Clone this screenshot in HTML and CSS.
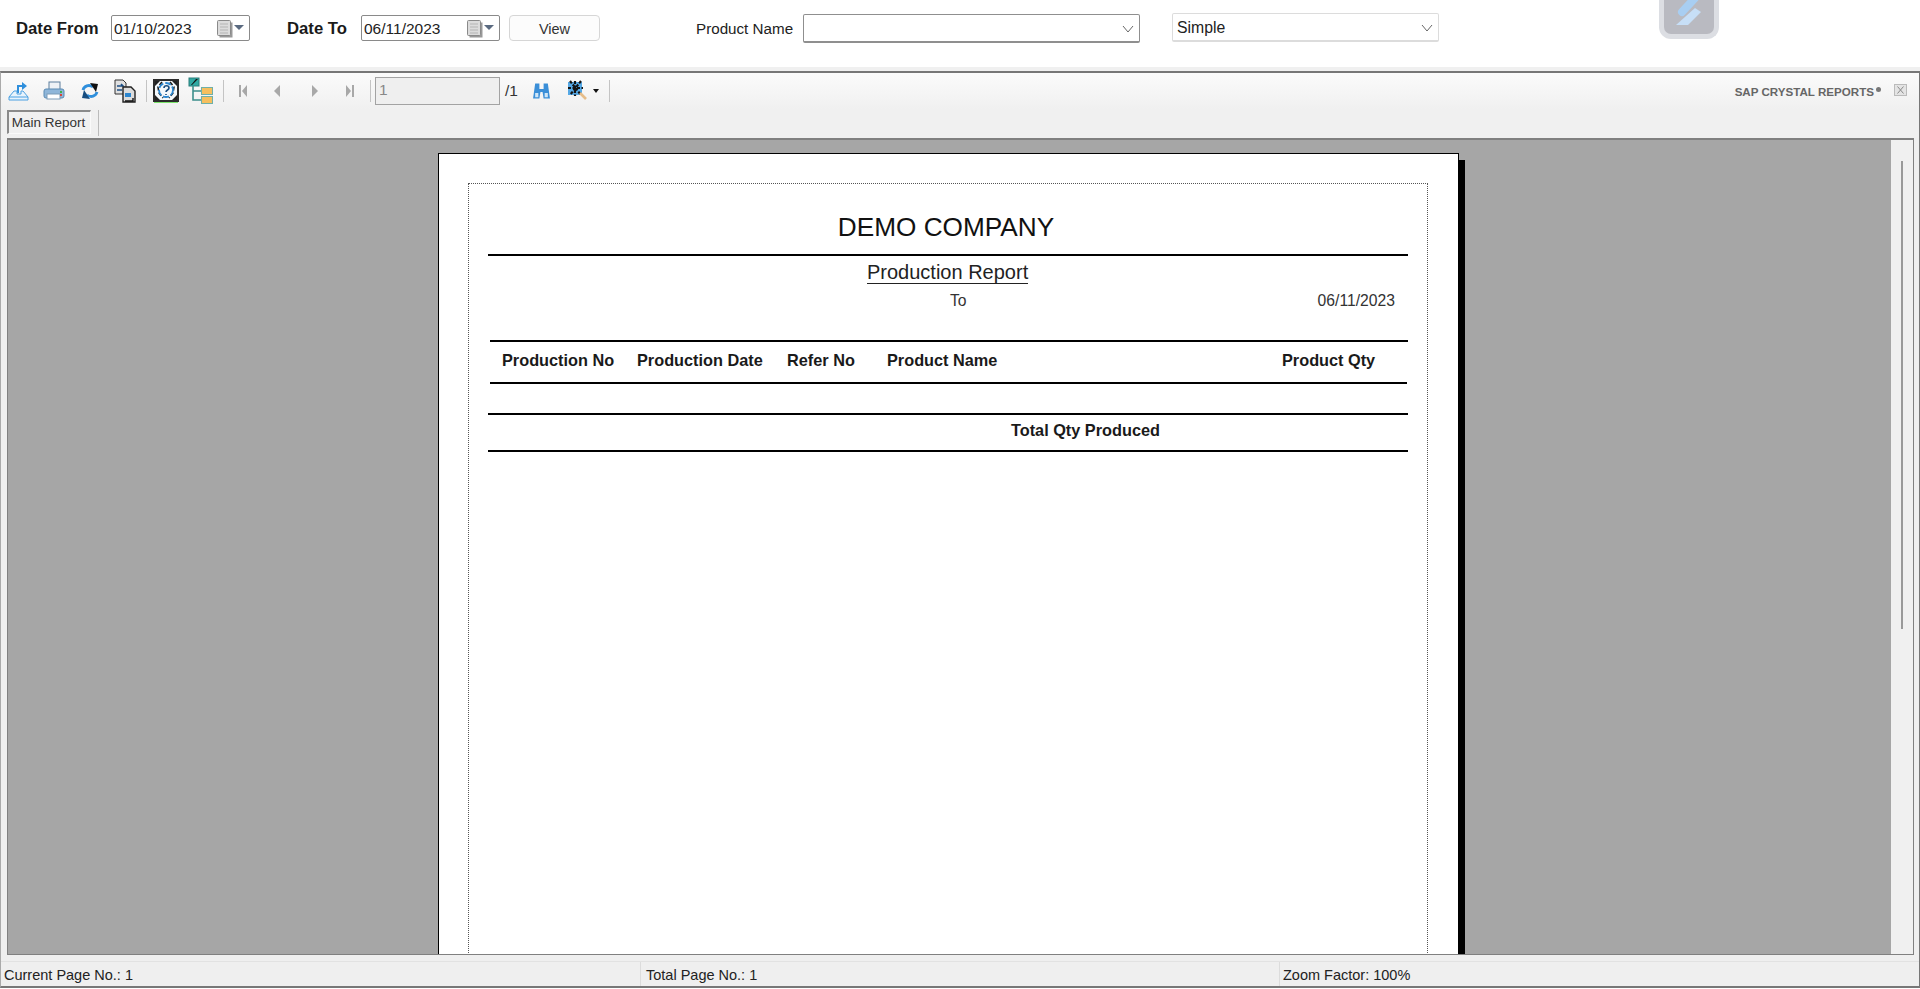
FILE: index.html
```html
<!DOCTYPE html>
<html lang="en">
<head>
    <meta charset="UTF-8">
    <title>Production Report</title>
    <link rel="stylesheet" href="styles.css">
</head>
<body>
    <div class="filter-bar">
        <span class="bold-label label-from">Date From</span>
        <div class="date-box">
            <span>01/10/2023</span>
            <svg class="cal-icon" width="28" height="18" viewBox="0 0 28 18">
                <rect x="2.500" y="2.500" width="13" height="15" fill="#999"/>
                <rect x="0.500" y="0.500" width="13" height="15" rx="1" fill="#dcdcdc" stroke="#8a8a8a"/>
                <path d="M3 4h8M3 7h8M3 10h8M3 13h8" stroke="#b4b4b4"/>
                <path d="M17 5h10l-5 5z" fill="#5a6a80"/>
            </svg>
        </div>
        <span class="bold-label label-to">Date To</span>
        <div class="date-box">
            <span>06/11/2023</span>
            <svg class="cal-icon" width="28" height="18" viewBox="0 0 28 18">
                <rect x="2.500" y="2.500" width="13" height="15" fill="#999"/>
                <rect x="0.500" y="0.500" width="13" height="15" rx="1" fill="#dcdcdc" stroke="#8a8a8a"/>
                <path d="M3 4h8M3 7h8M3 10h8M3 13h8" stroke="#b4b4b4"/>
                <path d="M17 5h10l-5 5z" fill="#5a6a80"/>
            </svg>
        </div>
        <button class="view-btn">View</button>
        <span class="product-label">Product Name</span>
        <div class="combo combo-product">
            <span></span>
            <svg width="12" height="8" viewBox="0 0 12 8"><path d="M1 1l5 6 5-6" fill="none" stroke="#666"/></svg>
        </div>
        <div class="combo combo-type">
            <span>Simple</span>
            <svg width="12" height="8" viewBox="0 0 12 8"><path d="M1 1l5 6 5-6" fill="none" stroke="#666"/></svg>
        </div>
        <div class="app-logo">
            <svg width="50" height="34" viewBox="0 0 50 34">
                <path d="M31 -2L18 12" fill="none" stroke="#a8cef2" stroke-width="8" stroke-linecap="round"/>
                <path d="M12 25L31 8l6 4-13 13z" fill="#c7dff7"/>
            </svg>
        </div>
    </div>
    <div class="band"></div>

    <div class="viewer">
        <div class="toolbar">
            <svg class="tool tool-export" width="21" height="20" viewBox="0 0 21 20">
                <path d="M10 12V5h5" fill="none" stroke="#2f8fdc" stroke-width="2"/>
                <path d="M14 1l5 4-5 4z" fill="#2f8fdc"/>
                <path d="M6 10h3v3h4v-3h2l5 6v3H1v-3z" fill="#e8f3fc" stroke="#4aa0e2"/>
                <path d="M1 16h19" stroke="#4aa0e2"/>
            </svg>
            <svg class="tool tool-print" width="22" height="20" viewBox="0 0 22 20">
                <rect x="6" y="1" width="11" height="8" fill="#eef2f6" stroke="#5d7f9e"/>
                <rect x="1" y="8" width="20" height="9" rx="2" fill="#8fb6d9" stroke="#5b8ab3"/>
                <rect x="4" y="13" width="13" height="5" fill="#fff" stroke="#7d9cb8"/>
                <rect x="17" y="10" width="2" height="2" fill="#3fb04a"/>
                <rect x="17" y="13" width="2" height="2" fill="#d8433a"/>
            </svg>
            <svg class="tool tool-refresh" width="18" height="18" viewBox="0 0 18 18">
                <path d="M2 8c1-4 6-6 10-3" fill="none" stroke="#2f8fdc" stroke-width="2.800"/>
                <path d="M9 1l8 1-2 8z" fill="#111"/>
                <path d="M16 10c-1 4-6 6-10 3" fill="none" stroke="#2f8fdc" stroke-width="2.800"/>
                <path d="M9 17l-8-1 2-8z" fill="#174d80"/>
            </svg>
            <svg class="tool tool-copy" width="22" height="24" viewBox="0 0 22 24">
                <path d="M1 1h8l3 3v11H1z" fill="#e0e0e0" stroke="#333"/>
                <path d="M3 7h6l-2-2M3 11h5" fill="none" stroke="#1c4f85" stroke-width="1.600"/>
                <path d="M9 8h8l4 4v11H9z" fill="#dcdcdc" stroke="#222" stroke-width="1.400"/>
                <rect x="11" y="14" width="6" height="4" fill="#2c86cf"/>
                <path d="M19 19v3h-8" fill="none" stroke="#111" stroke-width="1.400"/>
            </svg>
            <span class="tool-sep sep-a"></span>
            <svg class="tool tool-group" width="26" height="24" viewBox="0 0 26 24">
                <rect x="1" y="1" width="24" height="21" fill="#f4f8fb" stroke="#2b2b2b" stroke-width="2"/>
                <path d="M2 2h5L2 7zM24 2h-5l5 5zM2 21h5l-5-5zM24 21h-5l5-5z" fill="#222"/>
                <path d="M9 3l-4 5 1 6 4 5M17 3l4 5-1 6-4 5" fill="none" stroke="#1c1c1c" stroke-width="1.600" stroke-dasharray="4 2"/>
                <circle cx="13" cy="11" r="7" fill="none" stroke="#2a87d2" stroke-width="1.800" stroke-dasharray="6 2"/>
                <path d="M11 9c0-3 5-3 5 0 0 2-3 2-3 4M13 15v1" fill="none" stroke="#174d80" stroke-width="1.600"/>
                <path d="M1 23.500h24" stroke="#7be36b"/>
            </svg>
            <svg class="tool tool-tree" width="26" height="27" viewBox="0 0 26 27">
                <rect x="1" y="1" width="10" height="8" fill="#30a9a3" stroke="#2b7c7a"/>
                <path d="M3 8l5-6h2l-6 6z" fill="#111"/>
                <path d="M5 9v14h8M5 14h8" fill="none" stroke="#3d8f8c" stroke-width="1.600"/>
                <rect x="13.500" y="10.500" width="11" height="7" fill="#f6bf5e" stroke="#6fb0a8"/>
                <rect x="13.500" y="19.500" width="11" height="7" fill="#f6bf5e" stroke="#6fb0a8"/>
            </svg>
            <span class="tool-sep sep-b"></span>
            <svg class="tool nav-first" width="10" height="14" viewBox="0 0 10 14"><path d="M1 1h2v12H1zM9 1v12L4 7z" fill="#a8a8a8"/></svg>
            <svg class="tool nav-prev" width="8" height="14" viewBox="0 0 8 14"><path d="M7 1v12L1 7z" fill="#a8a8a8"/></svg>
            <svg class="tool nav-next" width="8" height="14" viewBox="0 0 8 14"><path d="M1 1v12l6-6z" fill="#a8a8a8"/></svg>
            <svg class="tool nav-last" width="10" height="14" viewBox="0 0 10 14"><path d="M1 1v12l5-6zM7 1h2v12H7z" fill="#a8a8a8"/></svg>
            <span class="tool-sep sep-c"></span>
            <div class="page-box">1</div>
            <span class="page-total">/1</span>
            <svg class="tool tool-find" width="19" height="18" viewBox="0 0 18 16">
                <path d="M3 1h4v5h4V1h4l2 14h-6l-1-6H8l-1 6H1z" fill="#3b8fd8"/>
                <path d="M3 10h3v4H3zM12 10h3v4h-3z" fill="#cfe6f8"/>
            </svg>
            <svg class="tool tool-zoom" width="20" height="21" viewBox="0 0 20 21">
                <rect x="1" y="2" width="14" height="13" fill="#56a9e6"/>
                <path d="M3 1l11 14M14 1L3 15M1 8h15M8 1v15" stroke="#141414" stroke-width="2.200" stroke-dasharray="3 1.500"/>
                <path d="M13 13l6 6" stroke="#e6bd8a" stroke-width="2.600"/>
            </svg>
            <span class="tool-caret"></span>
            <span class="tool-sep sep-d"></span>
            <span class="brand">SAP CRYSTAL REPORTS<i class="brand-mark"></i></span>
            <svg class="close-x" width="13" height="12" viewBox="0 0 13 12">
                <rect x="0.500" y="0.500" width="12" height="11" fill="#e4e4e4" stroke="#bbb"/>
                <path d="M3.500 2.500l6 7M9.500 2.500l-6 7" stroke="#8a8a8a"/>
            </svg>
        </div>

        <div class="tab-row">
            <div class="tab">Main Report</div>
            <span class="tab-sep"></span>
        </div>

        <div class="report-area">
            <div class="canvas">
                <div class="page">
                    <div class="page-frame">
                        <h1 class="company">DEMO COMPANY</h1>
                        <div class="rule rule-head"></div>
                        <div class="report-title"><span>Production Report</span></div>
                        <div class="date-row">
                            <span class="date-to-word">To</span>
                            <span class="date-value">06/11/2023</span>
                        </div>
                        <div class="rule rule-cols-top"></div>
                        <div class="col-row">
                            <span>Production No</span>
                            <span>Production Date</span>
                            <span>Refer No</span>
                            <span>Product Name</span>
                            <span>Product Qty</span>
                        </div>
                        <div class="rule rule-cols-bottom"></div>
                        <div class="rule rule-total-top"></div>
                        <div class="total-row">Total Qty Produced</div>
                        <div class="rule rule-total-bottom"></div>
                    </div>
                </div>
            </div>
            <div class="scroll-track"><span class="scroll-thumb"></span></div>
        </div>

        <div class="status-bar">
            <div class="status-cell cell-current">Current Page No.: 1</div>
            <div class="status-cell cell-total">Total Page No.: 1</div>
            <div class="status-cell cell-zoom">Zoom Factor: 100%</div>
        </div>
    </div>
</body>
</html>
```

FILE: styles.css
```css
html, body {
    margin: 0;
    padding: 0;
    height: 989px;
    overflow: hidden;
    background: white;
}
body {
    font-family: "Liberation Sans", Arial, sans-serif;
    color: #222;
}

/* filter bar */
.filter-bar {
    height: 67px;
    box-sizing: border-box;
    padding: 15px 0 0 16px;
    display: flex;
    align-items: flex-start;
}
.bold-label {
    font-size: 16.700px;
    font-weight: bold;
    line-height: 27px;
    color: #1a1a1a;
}
.label-from {
    width: 95px;
}
.label-to {
    margin-left: 37px;
    width: 74px;
}
.date-box {
    width: 139px;
    height: 26px;
    box-sizing: border-box;
    border: 1px solid #8a8a8a;
    border-radius: 2px;
    padding: 1px 4px 0 2px;
    display: flex;
    align-items: center;
    justify-content: space-between;
    font-size: 15.500px;
}
.view-btn {
    margin-left: 9px;
    width: 91px;
    height: 26px;
    background: #fcfcfc;
    border: 1px solid #d6d6d6;
    border-radius: 4px;
    font-family: inherit;
    font-size: 14.500px;
    color: #333;
    padding: 2px 0 0;
}
.product-label {
    margin-left: 96px;
    width: 107px;
    font-size: 15.200px;
    line-height: 28px;
    color: #222;
}
.combo {
    height: 29px;
    box-sizing: border-box;
    background: white;
    display: flex;
    align-items: center;
    justify-content: space-between;
    font-size: 15.800px;
    padding: 1px 5px 0 4px;
}
.combo-product {
    width: 337px;
    margin-top: -1px;
    border: 1px solid #8f8f8f;
    border-bottom-width: 2px;
    border-radius: 2px;
}
.combo-type {
    width: 267px;
    margin-left: 32px;
    margin-top: -2px;
    border: 1px solid #dcdcdc;
    border-bottom-width: 2px;
    border-radius: 2px;
}
.app-logo {
    margin-left: 220px;
    margin-top: -15px;
    width: 60px;
    height: 39px;
    box-sizing: border-box;
    background: #b9bac1;
    border: 5px solid #dcdee3;
    border-top: none;
    border-radius: 0 0 12px 12px;
    display: flex;
    justify-content: center;
}
.band {
    height: 4px;
    background: #f0f0f0;
}

/* viewer */
.viewer {
    height: 917px;
    box-sizing: border-box;
    border: 1px solid #777;
    border-top-width: 2px;
    border-bottom-width: 2px;
    border-left-color: #aaa;
    background: #efefef;
    display: flex;
    flex-direction: column;
}
.toolbar {
    height: 36px;
    flex: none;
    box-sizing: border-box;
    padding-bottom: 1px;
    display: flex;
    align-items: center;
    background: linear-gradient(#fbfbfb, #f0f0f0);
    font-size: 15px;
}
.tool {
    flex: none;
}
.tool-export { margin-left: 7px; }
.tool-print { margin-left: 14px; }
.tool-refresh { margin-left: 16px; }
.tool-copy { margin-left: 15px; }
.tool-sep {
    width: 1px;
    height: 22px;
    background: #c4c4c4;
    flex: none;
}
.sep-a { margin-left: 10px; }
.tool-group { margin-left: 6px; }
.tool-tree { margin-left: 9px; }
.sep-b { margin-left: 9px; }
.nav-first { margin-left: 14px; }
.nav-prev { margin-left: 25px; }
.nav-next { margin-left: 30px; }
.nav-last { margin-left: 26px; }
.sep-c { margin-left: 15px; }
.page-box {
    margin-left: 4px;
    width: 125px;
    height: 28px;
    box-sizing: border-box;
    background: #efefef;
    border: 1px solid #a3a3a3;
    padding-left: 3px;
    font-size: 15.500px;
    color: #888;
    line-height: 24px;
}
.page-total {
    margin-left: 5px;
    width: 27px;
    font-size: 15.500px;
    color: #333;
}
.tool-zoom { margin-left: 16px; }
.tool-caret {
    margin-left: 6px;
    border-left: 3.500px solid transparent;
    border-right: 3.500px solid transparent;
    border-top: 4px solid #111;
}
.sep-d { margin-left: 10px; }
.brand {
    margin-left: auto;
    margin-top: 2px;
    font-size: 11.600px;
    font-weight: bold;
    color: #666;
    display: flex;
    align-items: flex-start;
}
.brand-mark {
    width: 5px;
    height: 5px;
    border-radius: 50%;
    background: #777;
    margin: 2px 0 0 2px;
}
.close-x {
    margin-left: 13px;
    margin-right: 12px;
    margin-top: -2px;
}
.tab-row {
    height: 29px;
    flex: none;
    box-sizing: border-box;
    padding: 1px 0 0 6px;
    display: flex;
    background: #f0f0f0;
}
.tab {
    width: 84px;
    height: 24px;
    box-sizing: border-box;
    border-top: 2px solid #8a8a8a;
    border-left: 2px solid #8a8a8a;
    border-bottom: 1px solid #fafafa;
    border-right: 1px solid #fafafa;
    padding-right: 2px;
    font-size: 13.500px;
    line-height: 22px;
    text-align: center;
    color: #333;
}
.tab-sep {
    margin-left: 7px;
    width: 1px;
    height: 26px;
    background: #bbb;
}

/* report canvas */
.report-area {
    height: 817px;
    flex: none;
    margin: 0 5px 0 6px;
    box-sizing: border-box;
    border-top: 2px solid #808080;
    border-left: 1px solid #808080;
    border-right: 1px solid #808080;
    border-bottom: 1px solid #808080;
    background: #a6a6a6;
    display: flex;
    overflow: hidden;
}
.canvas {
    flex: 1;
    padding: 13px 0 0 430px;
    overflow: hidden;
}
.page {
    width: 1021px;
    height: 900px;
    box-sizing: border-box;
    background: white;
    border: 1px solid #000;
    box-shadow: 6px 7px 0 #000;
    padding: 29px 0 0 29px;
}
.page-frame {
    width: 960px;
    height: 860px;
    box-sizing: border-box;
    border: 1px dotted #555;
    padding-left: 19px;
}
.company {
    margin: 23px 0 0;
    width: 916px;
    height: 47px;
    font-size: 26.200px;
    font-weight: normal;
    line-height: 40px;
    text-align: center;
    color: #111;
}
.rule {
    height: 2px;
    width: 920px;
    background: #000;
}
.report-title {
    margin-top: 4px;
    width: 920px;
    padding-left: 379px;
    box-sizing: border-box;
    font-size: 20px;
    line-height: 24px;
    color: #222;
}
.report-title span {
    display: inline-block;
    border-bottom: 1px solid #222;
    line-height: 22px;
}
.date-row {
    height: 24px;
    margin-top: 5px;
    display: flex;
    font-size: 15.700px;
    line-height: 24px;
    color: #333;
}
.date-to-word {
    margin-left: 462px;
}
.date-value {
    margin-left: 351px;
}
.rule-cols-top {
    margin-top: 27px;
    margin-left: 2px;
    width: 918px;
}
.col-row {
    height: 40px;
    box-sizing: border-box;
    padding-bottom: 3px;
    margin-left: 14px;
    display: grid;
    grid-template-columns: 135px 150px 100px 395px auto;
    align-items: center;
    font-size: 16.300px;
    font-weight: bold;
    color: #1a1a1a;
}
.rule-cols-bottom {
    margin-left: 2px;
    width: 917px;
}
.rule-total-top {
    margin-top: 29px;
}
.total-row {
    height: 35px;
    padding-left: 523px;
    font-size: 16.300px;
    font-weight: bold;
    line-height: 31px;
    color: #1a1a1a;
}
.scroll-track {
    width: 22px;
    flex: none;
    background: #f0f0f0;
    display: flex;
    justify-content: center;
    padding-top: 21px;
    box-sizing: border-box;
}
.scroll-thumb {
    width: 2px;
    height: 468px;
    background: #999;
}

/* status bar */
.status-bar {
    margin-top: 6px;
    height: 25px;
    flex: none;
    box-sizing: border-box;
    border-top: 1px solid #e2e2e2;
    display: flex;
    font-size: 14.500px;
    line-height: 26px;
    color: #222;
}
.status-cell {
    box-sizing: border-box;
    padding-left: 3px;
}
.cell-current { width: 639px; }
.cell-total {
    width: 639px;
    border-left: 1px solid #dcdcdc;
    padding-left: 5px;
}
.cell-zoom {
    flex: 1;
    border-left: 1px solid #dcdcdc;
    padding-left: 3px;
}
```
